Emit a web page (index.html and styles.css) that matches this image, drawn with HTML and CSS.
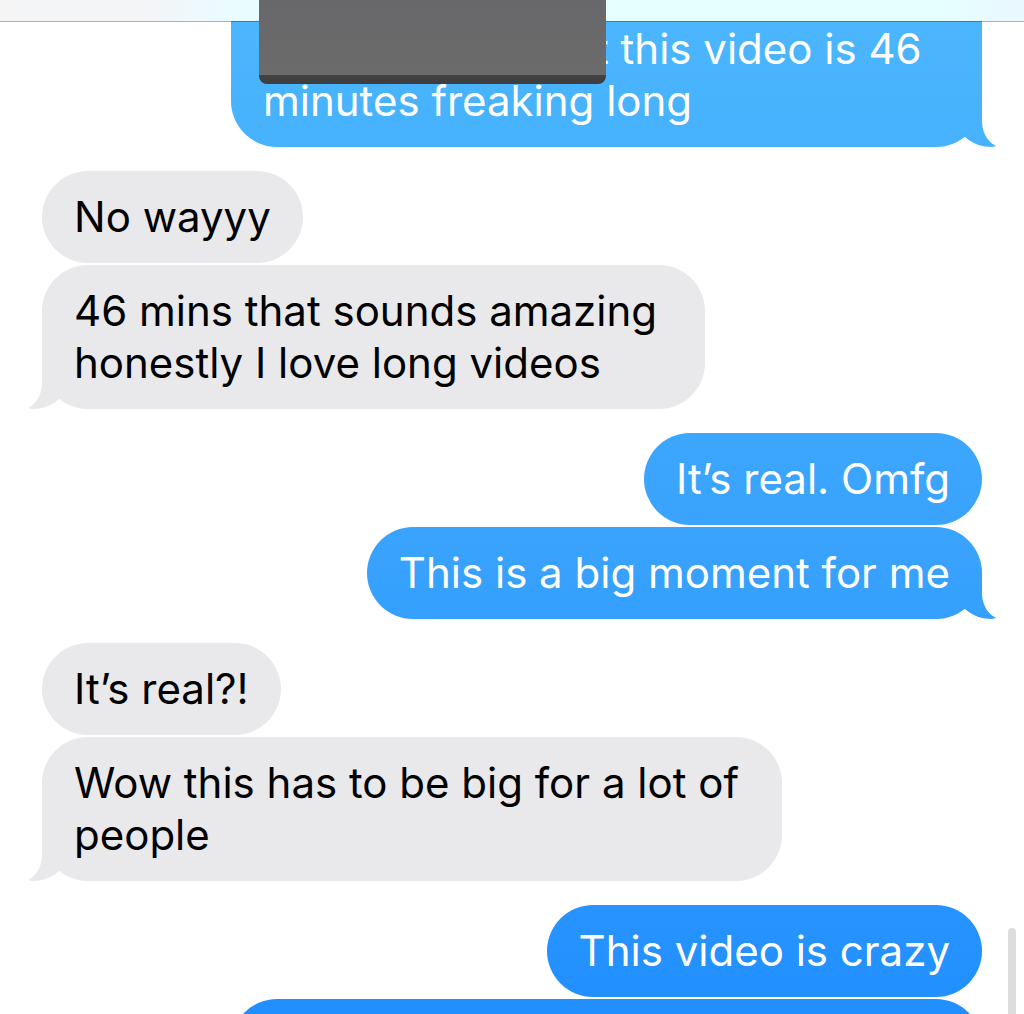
FILE: index.html
```html
<!DOCTYPE html>
<html lang="en">
<head>
<meta charset="utf-8">
<meta name="viewport" content="width=device-width, initial-scale=1">
<title>Messages</title>
<link rel="stylesheet" href="styles.css">
</head>
<body>
<header class="topbar"></header>
<main class="thread">
  <section class="group sent">
    <p class="bubble bubble-wide continued tail"><span class="hidden-words"></span>t this video is 46 minutes freaking long</p>
  </section>
  <section class="group received">
    <p class="bubble">No wayyy</p>
    <p class="bubble bubble-narrow tail">46 mins that sounds amazing honestly I love long videos</p>
  </section>
  <section class="group sent">
    <p class="bubble">It’s real. Omfg</p>
    <p class="bubble tail">This is a big moment for me</p>
  </section>
  <section class="group received">
    <p class="bubble">It’s real?!</p>
    <p class="bubble bubble-medium tail">Wow this has to be big for a lot of people</p>
  </section>
  <section class="group sent">
    <p class="bubble">This video is crazy</p>
    <p class="bubble bubble-wide next"></p>
  </section>
</main>
<div class="cover"></div>
<div class="scroll-thumb"></div>
</body>
</html>
```
FILE: styles.css
```css
* {
  box-sizing: border-box;
}

body {
  margin: 0;
  background: #fff;
  color: #000;
  font-family: Inter, "Liberation Sans", sans-serif;
  font-size: 42px;
  line-height: 52px;
}

.topbar {
  position: fixed;
  z-index: 1;
  top: 0;
  left: 0;
  right: 0;
  height: 22px;
  border-bottom: 1px solid rgba(0, 0, 0, 0.3);
  background: linear-gradient(90deg, #f5f5f6 0, #f3f5f8 15%, #ebfbff 22%, #e6ffff 30%, #e6ffff 92%, #eaf7ff 100%) padding-box;
}

.thread {
  display: flex;
  flex-direction: column;
  gap: 24px;
  height: 100vh;
  padding: 0 42px;
  overflow: hidden;
}

.group {
  display: flex;
  flex: none;
  flex-direction: column;
  gap: 2px;
}

.sent {
  align-items: flex-end;
}

.received {
  align-items: flex-start;
}

.bubble {
  position: relative;
  isolation: isolate;
  margin: 0;
  padding: 20px 32px;
  border-radius: 46px;
  background: #e9e9eb;
}

.sent .bubble {
  background: linear-gradient(#4cb7fd, #38a2fd 55%, #218fff) fixed;
  color: #fff;
}

.bubble-narrow {
  max-width: 663px;
}

.bubble-medium {
  max-width: 740px;
}

.bubble-wide {
  max-width: 751px;
}

.continued {
  padding-top: 23px;
  border-top-left-radius: 0;
  border-top-right-radius: 0;
}

.next {
  width: 100%;
  min-height: 92px;
}

.hidden-words {
  display: inline-block;
  width: 332px;
}

.tail::after {
  content: "";
  position: absolute;
  z-index: -1;
  right: -14px;
  bottom: 0;
  width: 56px;
  height: 46px;
  background: inherit;
  clip-path: path("M42 0V22C43 33 48 41 56 45L52 46C42 46 33 43 25 36L0 0Z");
}

.received .tail::after {
  right: auto;
  left: -14px;
  transform: scaleX(-1);
}

.cover {
  position: absolute;
  z-index: 2;
  top: 0;
  left: 259px;
  width: 347px;
  height: 84px;
  border-radius: 0 0 8px 8px;
  background: linear-gradient(#68686a, #6b6b6c 75px, #424243 75px, #3e3e40 100%);
}

.scroll-thumb {
  position: fixed;
  top: 928px;
  right: 8px;
  bottom: 0;
  width: 8px;
  border-radius: 4px 4px 0 0;
  background: #ddd;
}
```
